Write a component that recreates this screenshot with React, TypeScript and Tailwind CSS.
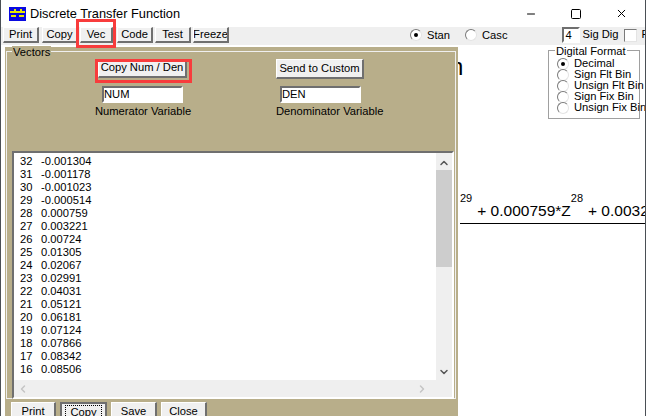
import { ChevronDown, ChevronLeft, ChevronRight, ChevronUp, Minus, Square, X } from 'lucide-react';

const rows = [
    ['32', '-0.001304'],
    ['31', '-0.001178'],
    ['30', '-0.001023'],
    ['29', '-0.000514'],
    ['28', '0.000759'],
    ['27', '0.003221'],
    ['26', '0.00724'],
    ['25', '0.01305'],
    ['24', '0.02067'],
    ['23', '0.02991'],
    ['22', '0.04031'],
    ['21', '0.05121'],
    ['20', '0.06181'],
    ['19', '0.07124'],
    ['18', '0.07866'],
    ['17', '0.08342'],
    ['16', '0.08506'],
];

const formats = ['Decimal', 'Sign Flt Bin', 'Unsign Flt Bin', 'Sign Fix Bin', 'Unsign Fix Bin'];

const Radio = ({ checked = false }: { checked?: boolean }) => (
    <span className="flex h-[12px] w-[12px] shrink-0 items-center justify-center rounded-full border border-t-[#7a7a7a] border-l-[#7a7a7a] border-r-[#e4e4e4] border-b-[#e4e4e4] bg-white">
        {checked && <span className="h-[4px] w-[4px] rounded-full bg-black" />}
    </span>
);

const Btn = ({ label, className }: { label: string; className: string }) => (
    <button className={`flex shrink-0 items-center justify-center overflow-hidden whitespace-nowrap border-t border-l border-t-white border-l-white border-r-2 border-b-2 border-r-[#6f6f6f] border-b-[#6f6f6f] bg-[#f0f0f0] text-[11.2px] leading-none text-black ${className}`}>
        {label}
    </button>
);

export default function App() {
    return (
        <div className="relative flex h-[416px] w-[646px] flex-col overflow-hidden whitespace-nowrap border-x border-x-[#4a4f55] bg-white font-['Liberation_Sans',sans-serif] text-[11.2px] text-black">
            {/* Title bar */}
            <div className="flex h-[27px] shrink-0 items-center pl-[8px]">
                <svg width="17" height="14" viewBox="0 0 17 14" className="mr-[4px]">
                    <rect width="17" height="14" fill="#0a0ae0" />
                    <rect x="1" y="4" width="15" height="2" fill="#e8e800" />
                    <rect x="2" y="8" width="5" height="2" fill="#e8e800" />
                    <rect x="10" y="8" width="5" height="2" fill="#e8e800" />
                    <rect x="5" y="2" width="2" height="3" fill="#e8e800" />
                    <rect x="11" y="2" width="2" height="3" fill="#e8e800" />
                </svg>
                <span className="text-[12.8px]">Discrete Transfer Function</span>
                <div className="ml-auto flex items-center gap-[33px] pr-[17px]">
                    <Minus size={12} strokeWidth={1} absoluteStrokeWidth />
                    <Square size={12} strokeWidth={1} absoluteStrokeWidth />
                    <X size={13} strokeWidth={1} absoluteStrokeWidth />
                </div>
            </div>

            {/* Toolbar */}
            <div className="flex h-[18px] shrink-0 items-start bg-[#efefef] pl-[2px]">
                <Btn label="Print" className="h-[16px] w-[36px]" />
                <Btn label="Copy" className="ml-[3px] h-[16px] w-[36px]" />
                <Btn label="Vec" className="ml-[2px] h-[16px] w-[33px]" />
                <Btn label="Code" className="ml-[4px] h-[16px] w-[36px]" />
                <Btn label="Test" className="ml-[2px] h-[16px] w-[36px]" />
                <Btn label="Freeze" className="ml-[2px] h-[16px] w-[36px]" />
                <div className="ml-[181px] flex h-[16px] items-center gap-[5px]">
                    <Radio checked />
                    <span>Stan</span>
                </div>
                <div className="ml-[15px] flex h-[16px] items-center gap-[5px]">
                    <Radio />
                    <span>Casc</span>
                </div>
                <div className="ml-[54px] flex h-[16px] w-[18px] shrink-0 items-center border-2 border-b-white border-r-white border-t-[#6f6f6f] border-l-[#6f6f6f] bg-white pl-[2px]">4</div>
                <span className="ml-[3px] leading-[15px]">Sig Dig</span>
                <span className="ml-[5px] mt-[2px] h-[13px] w-[13px] shrink-0 border border-t-[#7a7a7a] border-l-[#7a7a7a] border-r-[#e4e4e4] border-b-[#e4e4e4] bg-white" />
                <span className="ml-[5px] leading-[15px]">Fit</span>
            </div>

            <div className="flex min-h-0 flex-1">
                {/* Vectors dialog */}
                <div className="relative z-10 ml-[4px] mt-[2px] h-[371px] w-[453px] shrink-0 bg-[#b8ae8a] pl-[1px] pt-[4px]">
                    <div className="relative h-[348px] w-[450px] border border-[#efefef]">
                        <span className="absolute -top-[6px] left-[5px] bg-[#b8ae8a] px-[1px] leading-[13px]">Vectors</span>
                        <div className="flex pt-[7px]">
                            <div className="ml-[91px] flex w-[89px] flex-col items-center">
                                <Btn label="Copy Num / Den" className="h-[19px] w-[89px]" />
                            </div>
                            <div className="ml-[89px] flex w-[88px] flex-col items-center">
                                <Btn label="Send to Custom" className="h-[20px] w-[88px]" />
                            </div>
                        </div>
                        <div className="flex pt-[7px]">
                            <div className="ml-[95px] w-[81px]">
                                <div className="flex h-[17px] items-center border-2 border-t-[#6f6f6f] border-l-[#6f6f6f] border-r-white border-b-white bg-white">NUM</div>
                            </div>
                            <div className="ml-[97px] w-[81px]">
                                <div className="flex h-[17px] items-center border-2 border-t-[#6f6f6f] border-l-[#6f6f6f] border-r-white border-b-white bg-white">DEN</div>
                            </div>
                        </div>
                        <div className="flex pt-[2px] leading-[13px]">
                            <span className="ml-[88px] w-[96px] text-center">Numerator Variable</span>
                            <span className="ml-[85px] w-[106px] text-center">Denominator Variable</span>
                        </div>

                        {/* Coefficient list */}
                        <div className="ml-[5px] mt-[33px] flex h-[248px] w-[442px] flex-col border-2 border-t-[#6f6f6f] border-l-[#6f6f6f] border-r-white border-b-white bg-white">
                            <div className="flex min-h-0 flex-1">
                                <div className="flex-1 pl-[6px] pt-[2px]">
                                    {rows.map(([n, v]) => (
                                        <div key={n} className="flex h-[13px] items-center leading-[13px]">
                                            <span className="w-[21px]">{n}</span>
                                            <span>{v}</span>
                                        </div>
                                    ))}
                                </div>
                                <div className="flex w-[16px] flex-col items-center bg-[#efefef]">
                                    <ChevronUp size={12} strokeWidth={3} className="mt-[3px] h-[14px] text-[#555]" />
                                    <div className="h-[97px] w-full bg-[#cdcdcd]" />
                                    <ChevronDown size={12} strokeWidth={3} className="mb-[2px] mt-auto text-[#555]" />
                                </div>
                            </div>
                            <div className="flex h-[17px] items-center justify-between bg-[#efefef] pl-[3px] pr-[24px]">
                                <ChevronLeft size={12} strokeWidth={3} className="text-[#c4c4c4]" />
                                <ChevronRight size={12} strokeWidth={3} className="text-[#c4c4c4]" />
                            </div>
                        </div>
                    </div>
                    <div className="flex items-start gap-[4px] pl-[5px] pt-[3px]">
                        <Btn label="Print" className="h-[20px] w-[45px]" />
                        <button className="flex h-[20px] w-[47px] shrink-0 items-center justify-center border-2 border-[#6f6f6f] bg-[#f0f0f0] text-[11.2px]">
                            <span className="border border-dotted border-black px-[4px] leading-[13px]">Copy</span>
                        </button>
                        <Btn label="Save" className="h-[20px] w-[46px]" />
                        <Btn label="Close" className="h-[20px] w-[46px]" />
                    </div>
                </div>

                {/* Canvas behind the dialog */}
                <div className="flex min-w-0 flex-1 flex-col">
                    <div className="flex h-[147px] shrink-0 items-start">
                        <span className="-ml-[8px] mt-[8px] text-[24px] leading-[28px]">n</span>
                        <div className="relative ml-auto mr-[5px] mt-[5px] h-[69px] w-[92px] border border-[#a0a0a0] pl-[8px] pt-[7px]">
                            <span className="absolute -top-[6px] left-[6px] bg-white px-[1px] leading-[13px]">Digital Format</span>
                            {formats.map((f, i) => (
                                <div key={f} className="flex h-[11px] items-center gap-[5px] leading-[11px]">
                                    <Radio checked={i === 0} />
                                    <span>{f}</span>
                                </div>
                            ))}
                        </div>
                    </div>
                    <div className="flex h-[29px] items-end overflow-hidden pl-[2px] text-[15.5px] leading-[20px]">
                        <span className="self-start text-[11px] leading-[13px]">29</span>
                        <span className="ml-[5px]">+ 0.000759*Z</span>
                        <span className="self-start text-[11px] leading-[13px]">28</span>
                        <span className="ml-[5px]">+ 0.0032</span>
                    </div>
                    <div className="ml-[2px] mt-[2px] h-px bg-black" />
                </div>
            </div>

            {/* Red annotation boxes */}
            <div className="absolute left-[75px] top-[19px] z-20 h-[29px] w-[40px] border-[3px] border-[#f83c3c]" />
            <div className="absolute left-[94px] top-[59px] z-20 h-[24px] w-[97px] border-[3px] border-[#f83c3c]" />
        </div>
    );
}
